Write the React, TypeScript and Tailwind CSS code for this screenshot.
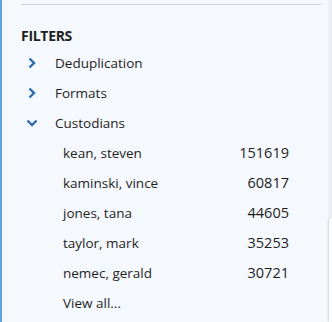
import React from 'react';

const custodians = [
  { name: 'kean, steven', count: 151619 },
  { name: 'kaminski, vince', count: 60817 },
  { name: 'jones, tana', count: 44605 },
  { name: 'taylor, mark', count: 35253 },
  { name: 'nemec, gerald', count: 30721 },
];

const Chevron: React.FC<{ open?: boolean }> = ({ open }) => (
  <svg width="12" height="12" viewBox="0 0 12 12" className="text-[#2b6cb0]">
    {open ? (
      <path d="M1.5 3.5 L6 8 L10.5 3.5" fill="none" stroke="currentColor" strokeWidth="2.4" />
    ) : (
      <path d="M3.5 1.5 L8 6 L3.5 10.5" fill="none" stroke="currentColor" strokeWidth="2.4" />
    )}
  </svg>
);

const App: React.FC = () => {
  return (
    <div
      className="relative w-[332px] h-[322px] overflow-hidden bg-[#f5f8fc] border-l-2 border-[#5aa3dc] text-[#1e1e1e] text-[13.5px]"
      style={{ fontFamily: '"Open Sans", "Noto Sans", sans-serif' }}
    >
      <div className="absolute right-0 top-0 h-full w-[5px] bg-gradient-to-r from-[#f5f8fc] to-[#e6e9ee]" />
      <div className="absolute right-0 top-[218px] bottom-0 w-[3px] rounded-tl-[4px] bg-[#fbfcfd] shadow-[-1px_0_2px_rgba(0,0,0,0.12)]" />
      <div className="ml-[19px] mr-[11px] mt-[4px] h-px bg-[#cfd2d6]" />
      <div className="pl-[19px] pt-[22px]">
        <div className="font-bold text-[14px] h-[18px] leading-[18px] tracking-[-0.3px]">FILTERS</div>
        <div className="mt-[3px]">
          {['Deduplication', 'Formats'].map(l => (
            <div key={l} className="flex items-center h-[30px]">
              <span className="w-[34px] pl-[5px] flex items-center"><Chevron /></span>
              <span>{l}</span>
            </div>
          ))}
          <div className="flex items-center h-[30px]">
            <span className="w-[34px] pl-[5px] flex items-center"><Chevron open /></span>
            <span>Custodians</span>
          </div>
          <div className="pl-[42px] pr-[43px]">
            {custodians.map(c => (
              <div key={c.name} className="flex items-center justify-between h-[30px]">
                <span>{c.name}</span>
                <span className="text-[14.5px]">{c.count}</span>
              </div>
            ))}
            <div className="flex items-center h-[30px]">View all...</div>
          </div>
        </div>
      </div>
    </div>
  );
};

export default App;
